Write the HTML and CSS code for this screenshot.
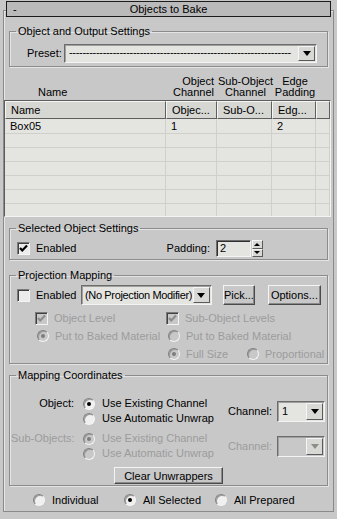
FILE: index.html
```html
<!DOCTYPE html>
<html lang="en">
<head>
    <meta charset="UTF-8">
    <title>Objects to Bake</title>
    <link rel="stylesheet" href="styles.css">
</head>
<body>
    <div class="title"><span class="minus">-</span>Objects to Bake</div>
    <div class="frame">
        <!-- Object and Output Settings -->
        <fieldset class="group group-output">
            <legend>Object and Output Settings</legend>
            <div class="preset-row">
                <span class="preset-label">Preset:</span>
                <div class="combo combo-preset">
                    <span class="combo-text">------------------------------------------------------------------</span>
                    <span class="combo-btn"><span class="tri"></span></span>
                </div>
            </div>
        </fieldset>

        <div class="col-labels">
            <div class="cl-name">Name</div>
            <div class="cl-obj">Object<br>Channel</div>
            <div class="cl-sub">Sub-Object<br>Channel</div>
            <div class="cl-edge">Edge<br>Padding</div>
        </div>

        <div class="list">
            <div class="list-head">
                <div class="hcell">Name</div>
                <div class="hcell">Objec...</div>
                <div class="hcell">Sub-O...</div>
                <div class="hcell">Edg...</div>
                <div class="hcell"></div>
            </div>
            <div class="list-body">
                <div class="list-row"><div class="cell">Box05</div><div class="cell">1</div><div class="cell"></div><div class="cell">2</div><div class="cell"></div></div>
                <div class="list-row"><div class="cell"></div><div class="cell"></div><div class="cell"></div><div class="cell"></div><div class="cell"></div></div>
                <div class="list-row"><div class="cell"></div><div class="cell"></div><div class="cell"></div><div class="cell"></div><div class="cell"></div></div>
                <div class="list-row"><div class="cell"></div><div class="cell"></div><div class="cell"></div><div class="cell"></div><div class="cell"></div></div>
                <div class="list-row"><div class="cell"></div><div class="cell"></div><div class="cell"></div><div class="cell"></div><div class="cell"></div></div>
                <div class="list-row"><div class="cell"></div><div class="cell"></div><div class="cell"></div><div class="cell"></div><div class="cell"></div></div>
                <div class="list-row"><div class="cell"></div><div class="cell"></div><div class="cell"></div><div class="cell"></div><div class="cell"></div></div>
            </div>
        </div>

        <!-- Selected Object Settings -->
        <fieldset class="group group-selected">
            <legend>Selected Object Settings</legend>
            <div class="selected-row">
                <label class="opt"><span class="check on"><svg viewBox="0 0 11 11"><path d="M2 5 L4.3 7.5 L9 2.5"/></svg></span>Enabled</label>
                <div class="padding-ctrl">
                    <span>Padding:</span>
                    <div class="spinner">
                        <span class="spin-field">2</span>
                        <span class="spin-btns"><span class="spin-up"></span><span class="spin-down"></span></span>
                    </div>
                </div>
            </div>
        </fieldset>

        <!-- Projection Mapping -->
        <fieldset class="group group-proj">
            <legend>Projection Mapping</legend>
            <div class="proj-row">
                <label class="opt"><span class="check"></span>Enabled</label>
                <div class="combo combo-proj">
                    <span class="combo-text">(No Projection Modifier)</span>
                    <span class="combo-btn"><span class="tri"></span></span>
                </div>
                <button class="btn btn-pick">Pick...</button>
                <button class="btn btn-options">Options...</button>
            </div>
            <div class="proj-grid">
                <label class="opt off"><span class="check on"><svg viewBox="0 0 11 11"><path d="M2 5 L4.3 7.5 L9 2.5"/></svg></span>Object Level</label>
                <label class="opt off span2"><span class="check on"><svg viewBox="0 0 11 11"><path d="M2 5 L4.3 7.5 L9 2.5"/></svg></span>Sub-Object Levels</label>
                <label class="opt off"><span class="radio on rad-in"></span>Put to Baked Material</label>
                <label class="opt off span2"><span class="radio rad-in"></span>Put to Baked Material</label>
                <span></span>
                <label class="opt off"><span class="radio on rad-in"></span>Full Size</label>
                <label class="opt off"><span class="radio rad-in"></span>Proportional</label>
            </div>
        </fieldset>

        <!-- Mapping Coordinates -->
        <fieldset class="group group-coords">
            <legend>Mapping Coordinates</legend>
            <div class="coord-block coord-object">
                <span class="coord-label">Object:</span>
                <div class="coord-radios">
                    <label class="opt"><span class="radio on"></span>Use Existing Channel</label>
                    <label class="opt"><span class="radio"></span>Use Automatic Unwrap</label>
                </div>
                <div class="channel">
                    <span>Channel:</span>
                    <div class="combo combo-chan">
                        <span class="combo-text">1</span>
                        <span class="combo-btn"><span class="tri"></span></span>
                    </div>
                </div>
            </div>
            <div class="coord-block coord-sub off">
                <span class="coord-label">Sub-Objects:</span>
                <div class="coord-radios">
                    <label class="opt"><span class="radio on"></span>Use Existing Channel</label>
                    <label class="opt"><span class="radio"></span>Use Automatic Unwrap</label>
                </div>
                <div class="channel">
                    <span>Channel:</span>
                    <div class="combo combo-chan disabled">
                        <span class="combo-text"></span>
                        <span class="combo-btn"><span class="tri"></span></span>
                    </div>
                </div>
            </div>
            <div class="clear-row"><button class="btn btn-clear">Clear Unwrappers</button></div>
        </fieldset>

        <div class="bottom-radios">
            <label class="opt"><span class="radio"></span>Individual</label>
            <label class="opt"><span class="radio on"></span>All Selected</label>
            <label class="opt"><span class="radio"></span>All Prepared</label>
        </div>
    </div>
</body>
</html>
```

FILE: styles.css
```css
/* Objects to Bake rollout */
body {
    margin: 0;
    padding-top: 1px;
    background-color: #c8c8c8;
    font-family: "Liberation Sans", Arial, sans-serif;
    font-size: 11px;
    line-height: 13px;
    color: #000;
    white-space: nowrap;
}

.title {
    position: relative;
    z-index: 1;
    height: 14px;
    margin: 0 6px 0 6px;
    border: 1px solid #1c1c1c;
    background-color: #bababa;
    text-align: center;
    line-height: 14px;
}

.minus {
    position: absolute;
    left: 6px;
    top: 0;
}

.frame {
    height: 486px;
    margin: -7px 3px 0;
    padding-top: 14px;
    border: 1px solid #8a8a8a;
    box-shadow: inset 1px 1px 0 #e6e6e6;
}

/* group boxes */
.group {
    margin: 0 5px;
    padding: 0 6px 3px;
    border: 1px solid #8c8c8c;
    box-shadow: inset 1px 1px 0 #e4e4e4, 1px 1px 0 #e4e4e4;
    min-width: 0;
}

.group legend {
    padding: 0 2px;
    margin-left: 0;
    line-height: 13px;
}

/* combos */
.combo {
    display: flex;
    box-sizing: border-box;
    background-color: #e4e4e0;
    border: 1px solid;
    border-color: #6c6c6c #f4f4f4 #f4f4f4 #6c6c6c;
    box-shadow: inset 1px 1px 0 #a0a0a0;
    overflow: hidden;
}

.combo-text {
    flex: 1;
    padding: 2px 0 0 4px;
    overflow: hidden;
}

.combo-btn {
    display: flex;
    align-items: center;
    justify-content: center;
    width: 15px;
    margin: 1px;
    background-color: #d8d8d4;
    border: 1px solid;
    border-color: #f6f6f6 #5a5a5a #5a5a5a #f6f6f6;
}

.tri {
    width: 0;
    height: 0;
    border-left: 4px solid transparent;
    border-right: 4px solid transparent;
    border-top: 5px solid #000;
}

.combo.disabled {
    background-color: #c8c8c8;
}

.combo.disabled .tri {
    border-top-color: #8c8c8c;
}

.preset-row {
    display: flex;
    align-items: center;
    margin-top: 6px;
    padding-left: 11px;
}

.preset-label {
    width: 37px;
}

.combo-preset {
    width: 253px;
    height: 19px;
}

.combo-preset .combo-text {
    padding-top: 1px;
    letter-spacing: -0.3px;
}

/* column captions above the list */
.col-labels {
    display: grid;
    grid-template-columns: 162px 51px 55px 44px;
    align-items: end;
    height: 24px;
    margin: 7px 0 0 1px;
    line-height: 11px;
}

.cl-name {
    padding-left: 33px;
}

.cl-obj {
    text-align: right;
    padding-right: 4px;
}

.cl-sub,
.cl-edge {
    text-align: center;
}

/* list view */
.list {
    width: 325px;
    margin: 2px 0 0 0;
    border: 1px solid;
    border-color: #5c5c5c #f4f4f4 #f4f4f4 #5c5c5c;
    background-color: #e4e4e0;
}

.list-head,
.list-row {
    display: grid;
    grid-template-columns: 161px 51px 55px 44px 1fr;
}

.hcell {
    box-sizing: border-box;
    height: 18px;
    padding: 2px 0 0 5px;
    background-color: #d6d6d2;
    border: 1px solid;
    border-color: #f6f6f6 #5e5e5e #5e5e5e #f6f6f6;
    overflow: hidden;
}

.list-body {
    height: 97px;
    overflow: hidden;
}

.list-row {
    height: 14px;
}

.cell {
    box-sizing: border-box;
    padding: 1px 0 0 5px;
    border-right: 1px solid #d0d0ca;
    border-bottom: 1px solid #d0d0ca;
}

.list-row:first-child {
    height: 15px;
}

.list-row:first-child .cell {
    padding-top: 1px;
}

/* checkboxes and radios */
.opt {
    display: flex;
    align-items: center;
}

.check {
    display: inline-flex;
    box-sizing: border-box;
    width: 13px;
    height: 13px;
    margin-right: 6px;
    background-color: #ececea;
    border: 1px solid;
    border-color: #7a7a7a #f4f4f4 #f4f4f4 #7a7a7a;
    box-shadow: inset 1px 1px 0 #404040;
}

.check svg {
    width: 11px;
    height: 11px;
    fill: none;
    stroke: #000;
    stroke-width: 2.2;
}

.radio {
    position: relative;
    box-sizing: border-box;
    width: 12px;
    height: 12px;
    margin-right: 7px;
    border-radius: 50%;
    background-color: #f0f0f0;
    border: 1px solid;
    border-color: #808080 #f4f4f4 #f4f4f4 #808080;
    box-shadow: inset 1px 1px 0 #9a9a9a;
}

.radio.on::after {
    content: "";
    position: absolute;
    left: 3px;
    top: 3px;
    width: 4px;
    height: 4px;
    border-radius: 50%;
    background-color: #000;
}

.off,
.off .opt {
    color: #9c9c9c;
}

.off .check,
.off .radio {
    background-color: #c8c8c8;
}

.off .check svg {
    stroke: #8c8c8c;
}

.off .radio.on::after {
    background-color: #7c7c7c;
}

/* selected object settings */
.group-selected {
    margin-top: 5px;
    padding-bottom: 2px;
}

.selected-row {
    display: flex;
    align-items: center;
    justify-content: space-between;
    height: 17px;
    margin-top: 5px;
    padding-left: 1px;
}

.padding-ctrl {
    display: flex;
    align-items: center;
    gap: 6px;
    margin-right: 58px;
}

.spinner {
    display: flex;
    height: 17px;
}

.spin-field {
    box-sizing: border-box;
    width: 35px;
    padding: 1px 0 0 3px;
    background-color: #e4e4e0;
    border: 1px solid;
    border-color: #6c6c6c #f4f4f4 #f4f4f4 #6c6c6c;
    box-shadow: inset 1px 1px 0 #303030;
}

.spin-btns {
    display: flex;
    flex-direction: column;
    width: 11px;
    margin-left: 1px;
}

.spin-up,
.spin-down {
    flex: 1;
    position: relative;
    background-color: #d8d8d4;
    border: 1px solid;
    border-color: #f6f6f6 #5a5a5a #5a5a5a #f6f6f6;
}

.spin-up::after,
.spin-down::after {
    content: "";
    position: absolute;
    left: 1px;
    top: 2px;
    border-left: 3px solid transparent;
    border-right: 3px solid transparent;
}

.spin-up::after {
    border-bottom: 3px solid #000;
}

.spin-down::after {
    top: 1px;
    border-top: 3px solid #000;
}

/* projection mapping */
.group-proj {
    margin-top: 9px;
    padding-bottom: 0;
}

.proj-row {
    display: flex;
    align-items: center;
    height: 20px;
    margin-top: 3px;
    padding-left: 1px;
}

.proj-row .opt {
    width: 65px;
}

.combo-proj {
    width: 133px;
    height: 20px;
}

.combo-proj .combo-text {
    padding: 3px 0 0 3px;
    letter-spacing: -0.35px;
}

.btn {
    box-sizing: border-box;
    height: 20px;
    padding: 0;
    background-color: #c8c8c8;
    border: 1px solid;
    border-color: #f4f4f4 #4a4a4a #4a4a4a #f4f4f4;
    box-shadow: inset -1px -1px 0 #8a8a8a;
    font-family: inherit;
    font-size: 11px;
    color: #000;
}

.btn-pick {
    width: 32px;
    margin-left: 11px;
}

.btn-options {
    width: 54px;
    margin-left: 13px;
}

.proj-grid {
    display: grid;
    grid-template-columns: 131px 79px 1fr;
    grid-auto-rows: 18px;
    align-items: center;
    padding-left: 19px;
    margin-top: 4px;
}

.span2 {
    grid-column: span 2;
}

.rad-in {
    margin-left: 2px;
    margin-right: 6px;
}

/* mapping coordinates */
.group-coords {
    margin-top: 5px;
    padding-bottom: 1px;
}

.coord-block {
    display: grid;
    grid-template-columns: 63px 154px 1fr;
    align-items: center;
    margin-left: -5px;
}

.coord-object {
    margin-top: 14px;
}

.coord-sub {
    margin-top: 5px;
}

.coord-label {
    align-self: start;
    text-align: right;
    line-height: 15px;
}

.coord-radios {
    padding-left: 9px;
}

.coord-radios .opt {
    height: 15px;
}

.channel {
    display: flex;
    align-items: center;
    gap: 5px;
}

.combo-chan {
    width: 48px;
    height: 21px;
}

.combo-chan .combo-text {
    padding-top: 3px;
}

.clear-row {
    display: flex;
    justify-content: center;
    margin-top: 6px;
}

.btn-clear {
    width: 109px;
    height: 17px;
}

/* bottom options */
.bottom-radios {
    display: grid;
    grid-template-columns: 91px 91px 1fr;
    height: 14px;
    align-items: center;
    margin-top: 7px;
    padding-left: 29px;
}
```
